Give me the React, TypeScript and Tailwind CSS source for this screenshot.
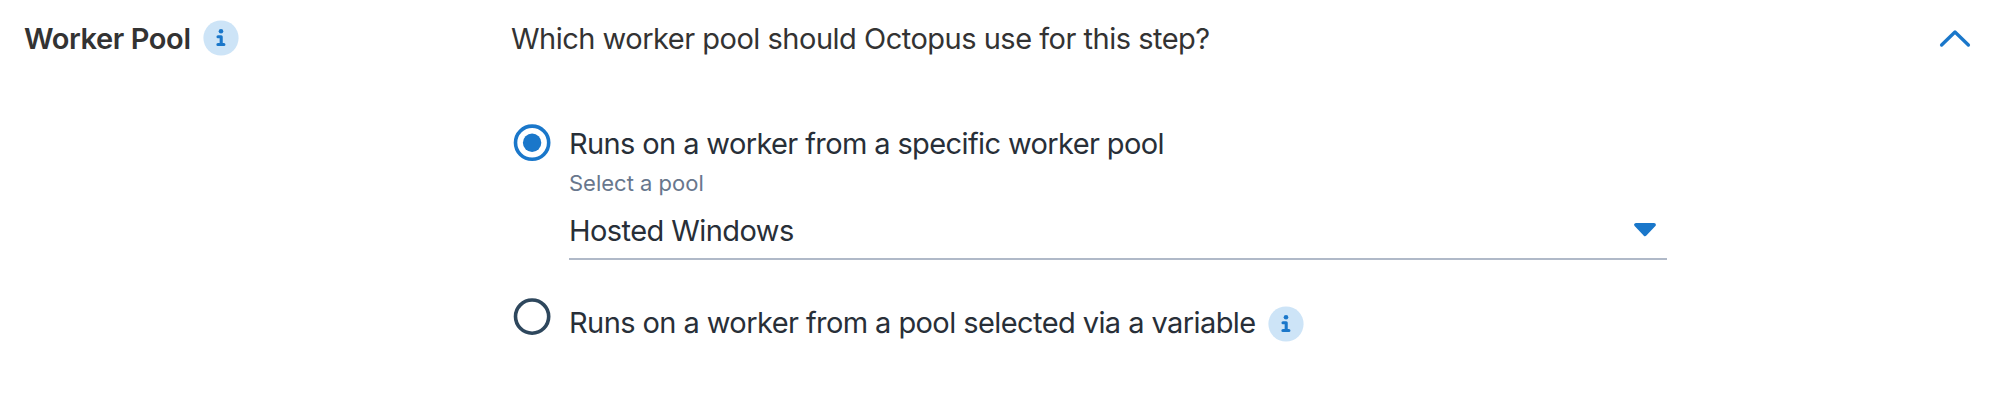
function Info({ className }: { className: string }) {
  return (
    <svg className={`shrink-0 ${className}`} width="36" height="36" viewBox="0 0 36 36">
      <circle cx="18" cy="18" r="17.6" fill="#cde4f7" />
      <circle cx="18" cy="11.3" r="2.3" fill="#1a77ca" />
      <path d="M15 16.8h3.2v7.5M14.9 24.5h6" fill="none" stroke="#1a77ca" strokeWidth="3.1" strokeLinecap="round" strokeLinejoin="round" />
    </svg>
  );
}

export default function App() {
  return (
    <main className="flex h-[401px] w-[2000px] bg-white pl-[25px] font-[Inter,sans-serif] text-[29px] leading-[37px] text-[#282f38]">
      <div className="flex w-[486px] items-start pt-5">
        <h2 className="-ml-px w-[168px] whitespace-nowrap font-semibold tracking-[-0.4px] text-[#333333]">Worker Pool</h2>
        <Info className="ml-[11px]" />
      </div>
      <section className="w-[1156px] pt-5">
        <p className="whitespace-nowrap tracking-[-0.5px] text-[#333333]">Which worker pool should Octopus use for this step?</p>
        <div className="mt-[67px] flex">
          <svg className="ml-[2px] shrink-0" width="38" height="38" viewBox="0 0 38 38">
            <circle cx="19.1" cy="18.7" r="16.6" fill="none" stroke="#1a77ca" strokeWidth="3.6" />
            <circle cx="19.1" cy="18.7" r="9.2" fill="#1a77ca" />
          </svg>
          <div className="ml-[18px] flex-1 pt-px">
            <div className="whitespace-nowrap tracking-[-0.62px]">Runs on a worker from a specific worker pool</div>
            <div className="mt-[5px] text-[22px] leading-8 text-[#68778d]">Select a pool</div>
            <div className="flex h-[61px] items-start justify-between border-b-2 border-[#b0b9c8] pt-[13px]">
              <span className="tracking-[-0.57px]">Hosted Windows</span>
              <svg className="mr-[10px] mt-[10px]" width="24" height="16" viewBox="0 0 24 16">
                <path d="M3 2.8h18L12 12.3Z" fill="#1a77ca" stroke="#1a77ca" strokeWidth="3.8" strokeLinejoin="round" />
              </svg>
            </div>
          </div>
        </div>
        <div className="mt-[38px] flex items-start">
          <svg className="ml-[2px] shrink-0" width="38" height="38" viewBox="0 0 38 38">
            <circle cx="19.1" cy="18.6" r="16.6" fill="none" stroke="#2e475d" strokeWidth="3.6" />
          </svg>
          <span className="ml-[18px] mt-1.5 w-[689px] whitespace-nowrap tracking-[-0.58px]">Runs on a worker from a pool selected via a variable</span>
          <Info className="ml-[10px] mt-2" />
        </div>
      </section>
      <svg className="ml-auto mr-7 mt-7" width="34" height="20" viewBox="0 0 34 20">
        <path d="M3.6 17 17 4l13.4 13" fill="none" stroke="#1a77ca" strokeWidth="3.3" strokeLinecap="round" strokeLinejoin="round" />
      </svg>
    </main>
  );
}
